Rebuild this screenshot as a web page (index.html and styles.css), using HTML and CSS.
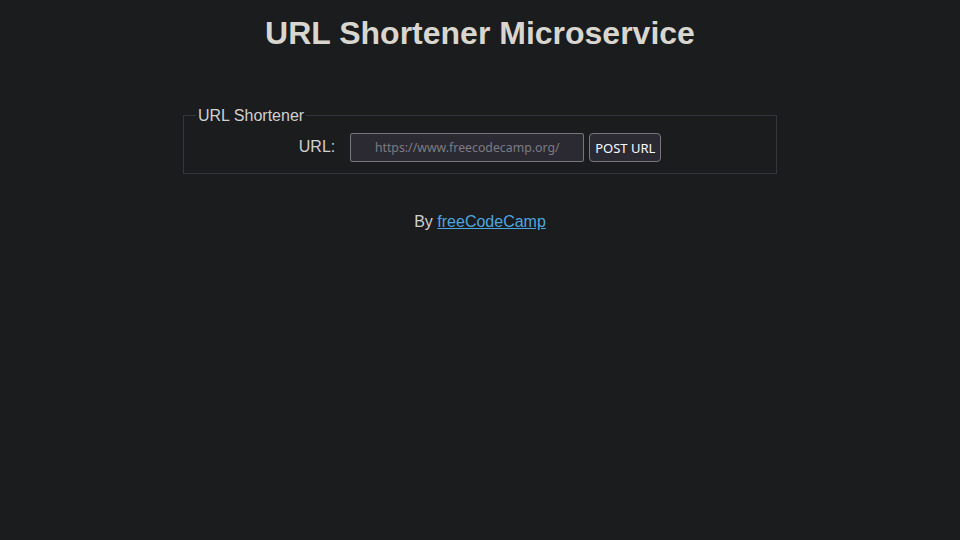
FILE: index.html
```html
<!DOCTYPE html>
<html>
<head>
<meta charset="utf-8">
<title>URL Shortener Microservice</title>
<link rel="stylesheet" href="styles.css">
</head>
<body>
<h1 class="title">URL Shortener Microservice</h1>
<main>
  <form class="form">
    <fieldset class="box">
      <legend class="legend">URL Shortener</legend>
      <div class="row">
        <label class="label" for="url_input">URL:</label>
        <input class="input" id="url_input" type="text" name="url" placeholder="https://www.freecodecamp.org/">
        <button class="btn" type="button">POST URL</button>
      </div>
    </fieldset>
  </form>
</main>
<footer class="footer">
  <p class="by">By <a class="link" href="#">freeCodeCamp</a></p>
</footer>
</body>
</html>
```
FILE: styles.css
```css
html, body {
  margin: 0;
  padding: 0;
  background: #1b1c1e;
  color: #d0d0d0;
  font-family: "Liberation Sans", Arial, sans-serif;
  font-size: 16px;
}
.title {
  margin: 15px 0 0;
  font-size: 32px;
  line-height: 37px;
  font-weight: bold;
  text-align: center;
  color: #d8d6cf;
}
.form {
  margin: 53px 0 0;
}
.box {
  box-sizing: border-box;
  width: 594px;
  margin: 0 auto;
  padding: 0 12px 11px;
  border: 1px solid #35363b;
  min-width: 0;
}
.legend {
  padding: 2px 2px 0;
  font-size: 16px;
  line-height: 18px;
  color: #d0d0d0;
}
.row {
  margin-top: 8px;
  display: flex;
  justify-content: center;
  align-items: center;
  height: 29px;
}
.label {
  font-size: 16px;
  color: #d0d0d0;
  margin-right: 15px;
  position: relative;
  top: -1px;
}
.input {
  box-sizing: border-box;
  width: 234px;
  height: 29px;
  margin: 0 5px 0 0;
  padding: 0 4px;
  border: 1px solid #77767f;
  border-radius: 2px;
  background: #2b2a33;
  color: #e0e0e0;
  font-family: "Noto Sans", "Open Sans", sans-serif;
  font-size: 12.3px;
  text-align: center;
  outline: none;
}
.input::placeholder {
  color: #7c7c82;
}
.btn {
  box-sizing: border-box;
  width: 72px;
  height: 29px;
  margin: 0;
  padding: 0;
  border: 1px solid #77767f;
  border-radius: 4px;
  background: #2b2a33;
  color: #fbfbfe;
  font-family: "Noto Sans", "Open Sans", sans-serif;
  font-size: 13px;
}
.footer {
  margin-top: 39px;
  text-align: center;
}
.by {
  margin: 0;
  line-height: 18px;
  color: #d0d0d0;
}
.link {
  color: #4ea6de;
}
```
